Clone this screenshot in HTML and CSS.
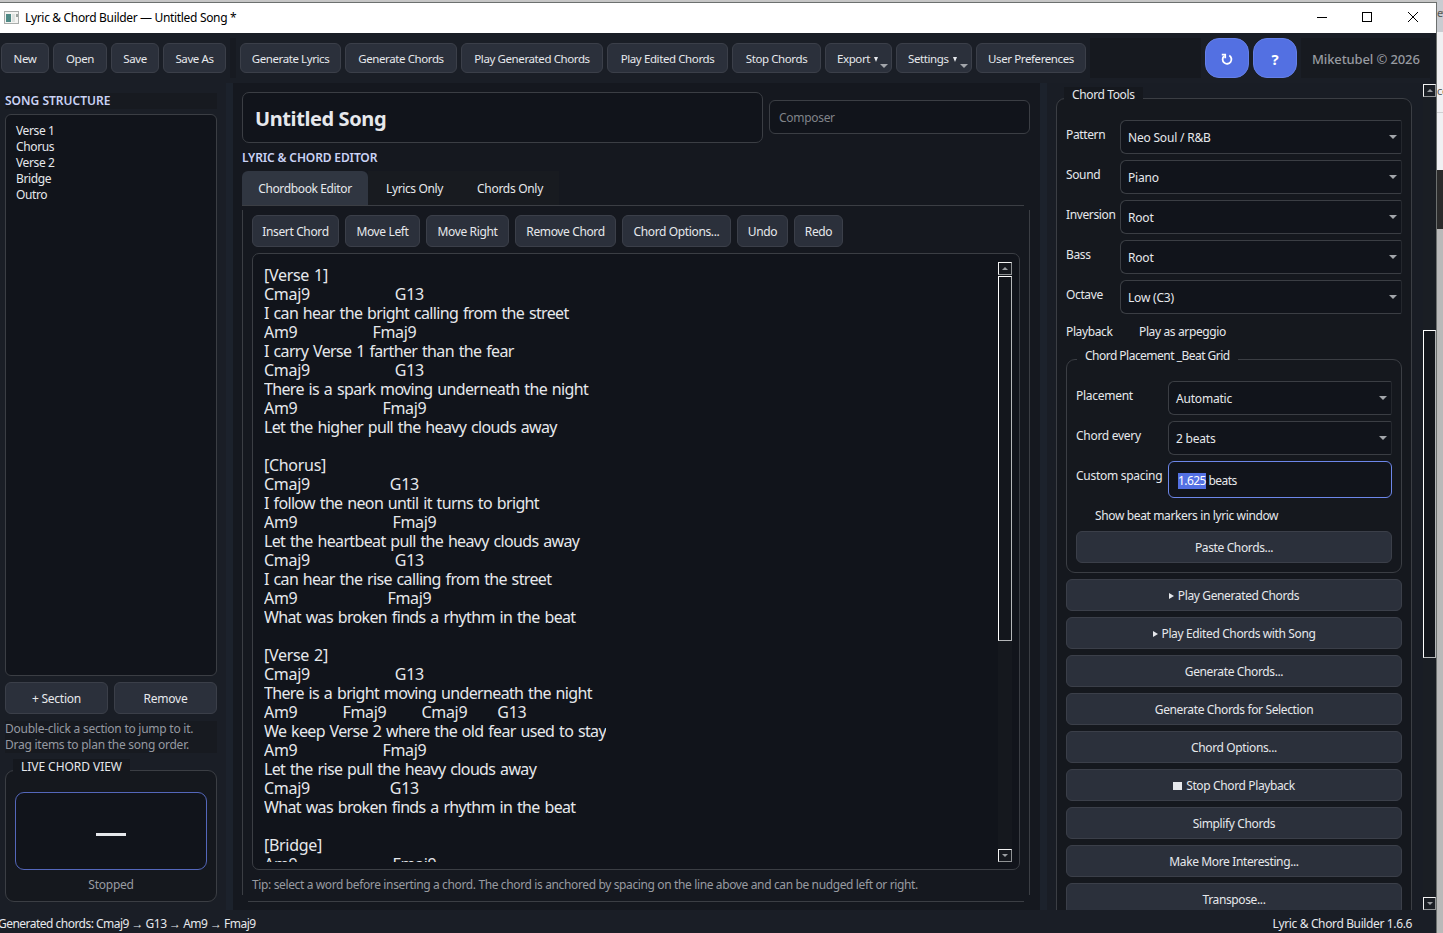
FILE: index.html
```
<!DOCTYPE html>
<html lang="en">
<head>
    <meta charset="UTF-8">
    <title>Lyric &amp; Chord Builder</title>
    <link rel="stylesheet" href="styles.css">
</head>
<body>

<div class="window">
    <div class="titlebar">
        <svg class="app-icon" width="15" height="13" viewBox="0 0 15 13">
            <rect x="0.5" y="0.5" width="14" height="12" fill="#f4f4f2" stroke="#a9adab"/>
            <rect x="2" y="3" width="5" height="8" fill="#4f8a86"/>
            <rect x="8" y="3" width="3" height="8" fill="#dde2df"/>
            <rect x="12" y="3" width="2" height="3" fill="#9aa39f"/>
        </svg>
        <span class="window-title">Lyric &amp; Chord Builder — Untitled Song *</span>
        <svg class="window-buttons" width="104" height="12" viewBox="0 0 104 12" fill="none" stroke="#000">
            <path d="M0 6.500H10"/>
            <rect x="45.500" y="1.500" width="9" height="9"/>
            <path d="M91 1L101 11M101 1L91 11"/>
        </svg>
    </div>

    <div class="toolbar">
        <div class="btn w-new">New</div>
        <div class="btn w-open">Open</div>
        <div class="btn w-save">Save</div>
        <div class="btn w-save-as">Save As</div>
        <div class="separator"></div>
        <div class="btn w-gen-lyrics">Generate Lyrics</div>
        <div class="btn w-gen-chords">Generate Chords</div>
        <div class="btn w-play-gen">Play Generated Chords</div>
        <div class="btn w-play-edit">Play Edited Chords</div>
        <div class="btn w-stop">Stop Chords</div>
        <div class="btn menu w-export">Export<i class="tri"></i></div>
        <div class="btn menu w-settings">Settings<i class="tri"></i></div>
        <div class="btn w-prefs">User Preferences</div>
        <div class="spacer"></div>
        <div class="round">
            <svg width="12" height="12" viewBox="0 0 12 12" fill="none" stroke="#fff" stroke-width="1.800">
                <path d="M8.300 2.600A4.400 4.400 0 1 1 3 3.200"/>
                <path d="M0.800 1.700H4.200V5.200"/>
            </svg>
        </div>
        <div class="round">?</div>
        <div class="credit">Miketubel © 2026</div>
    </div>

    <div class="main">
        <div class="left">
            <div class="heading">SONG STRUCTURE</div>
            <ul class="sections">
                <li>Verse 1</li>
                <li>Chorus</li>
                <li>Verse 2</li>
                <li>Bridge</li>
                <li>Outro</li>
            </ul>
            <div class="section-buttons">
                <div class="btn">+ Section</div>
                <div class="btn">Remove</div>
            </div>
            <div class="hint">Double-click a section to jump to it.<br>Drag items to plan the song order.</div>
            <div class="group live">
                <span class="group-title">LIVE CHORD VIEW</span>
                <div class="live-chord"><span class="dash"></span></div>
                <div class="live-state">Stopped</div>
            </div>
        </div>

        <div class="splitter"></div>

        <div class="center">
            <div class="song-row">
                <div class="song-title">Untitled Song</div>
                <div class="composer">Composer</div>
            </div>
            <div class="heading">LYRIC &amp; CHORD EDITOR</div>
            <div class="tabs">
                <div class="tab active">Chordbook Editor</div>
                <div class="tab">Lyrics Only</div>
                <div class="tab">Chords Only</div>
            </div>
            <div class="pane">
                <div class="edit-bar">
                    <div class="btn w-insert">Insert Chord</div>
                    <div class="btn w-left">Move Left</div>
                    <div class="btn w-right">Move Right</div>
                    <div class="btn w-remove">Remove Chord</div>
                    <div class="btn w-options">Chord Options...</div>
                    <div class="btn w-undo">Undo</div>
                    <div class="btn w-redo">Redo</div>
                </div>
                <div class="editor">
<pre class="lyrics">[Verse 1]
Cmaj9                 G13
<span>I can hear the bright calling from the street</span>
Am9               Fmaj9
<span>I carry Verse 1 farther than the fear</span>
Cmaj9                 G13
<span>There is a spark moving underneath the night</span>
Am9                 Fmaj9
<span>Let the higher pull the heavy clouds away</span>

[Chorus]
Cmaj9                G13
<span>I follow the neon until it turns to bright</span>
Am9                   Fmaj9
<span>Let the heartbeat pull the heavy clouds away</span>
Cmaj9                 G13
<span>I can hear the rise calling from the street</span>
Am9                  Fmaj9
<span>What was broken finds a rhythm in the beat</span>

[Verse 2]
Cmaj9                 G13
<span>There is a bright moving underneath the night</span>
Am9         Fmaj9       Cmaj9      G13
<span>We keep Verse 2 where the old fear used to stay</span>
Am9                 Fmaj9
<span>Let the rise pull the heavy clouds away</span>
Cmaj9                G13
<span>What was broken finds a rhythm in the beat</span>

[Bridge]
Am9                   Fmaj9</pre>
                    <div class="scrollbar">
                        <div class="arrow up"></div>
                        <div class="thumb"></div>
                        <div class="arrow down"></div>
                    </div>
                </div>
                <div class="tip">Tip: select a word before inserting a chord. The chord is anchored by spacing on the line above and can be nudged left or right.</div>
            </div>
        </div>

        <div class="splitter"></div>

        <div class="right">
            <div class="group tools">
                <span class="group-title">Chord Tools</span>
                <div class="field"><label>Pattern</label><div class="combo">Neo Soul / R&amp;B</div></div>
                <div class="field"><label>Sound</label><div class="combo">Piano</div></div>
                <div class="field"><label>Inversion</label><div class="combo">Root</div></div>
                <div class="field"><label>Bass</label><div class="combo">Root</div></div>
                <div class="field"><label>Octave</label><div class="combo">Low (C3)</div></div>
                <div class="playback"><label>Playback</label><span>Play as arpeggio</span></div>

                <div class="group placement">
                    <span class="group-title">Chord Placement _Beat Grid</span>
                    <div class="field"><label>Placement</label><div class="combo">Automatic</div></div>
                    <div class="field"><label>Chord every</label><div class="combo">2 beats</div></div>
                    <div class="field"><label>Custom spacing</label><div class="spin"><mark>1.625</mark> beats</div></div>
                    <div class="markers">Show beat markers in lyric window</div>
                    <div class="btn">Paste Chords...</div>
                </div>

                <div class="actions">
                    <div class="btn"><i class="play"></i>Play Generated Chords</div>
                    <div class="btn"><i class="play"></i>Play Edited Chords with Song</div>
                    <div class="btn">Generate Chords...</div>
                    <div class="btn">Generate Chords for Selection</div>
                    <div class="btn">Chord Options...</div>
                    <div class="btn"><i class="stop"></i>Stop Chord Playback</div>
                    <div class="btn">Simplify Chords</div>
                    <div class="btn">Make More Interesting...</div>
                    <div class="btn">Transpose...</div>
                </div>
            </div>
            <div class="scrollbar">
                <div class="arrow up"></div>
                <div class="thumb"></div>
                <div class="arrow down"></div>
            </div>
        </div>
    </div>

    <div class="statusbar">
        <span class="status-text">Generated chords: Cmaj9 → G13 → Am9 → Fmaj9</span>
        <span class="version">Lyric &amp; Chord Builder 1.6.6</span>
    </div>
</div>

<!-- sliver of the window behind -->
<div class="behind">
    <div class="behind-top">ev</div>
    <div class="behind-bar">ce</div>
    <div class="behind-page"></div>
    <div class="behind-dark"></div>
    <div class="behind-rest"></div>
</div>

</body>
</html>
```
FILE: styles.css
```
* {
    box-sizing: border-box;
}

body {
    margin: 0;
    width: 1443px;
    height: 933px;
    display: flex;
    overflow: hidden;
    background-color: #c6c6c6;
    font-family: "Noto Sans", "Open Sans", sans-serif;
    font-size: 12px;
    line-height: 16px;
    letter-spacing: -0.37px;
    color: #e6e8ec;
}

.window {
    width: 1437px;
    height: 931px;
    margin-top: 2px;
    border-top: 1px solid #6c706f;
    border-right: 1px solid #6c706f;
    background-color: #1a1e26;
    display: flex;
    flex-direction: column;
    flex-shrink: 0;
}

/* title bar */
.titlebar {
    height: 30px;
    background-color: #fff;
    color: #000;
    display: flex;
    align-items: center;
    padding: 0 15px 2px 4px;
    flex-shrink: 0;
}

.window-title {
    margin: 2px 0 0 6px;
    flex: 1;
    letter-spacing: -0.33px;
}

/* buttons */
.btn {
    height: 32px;
    display: flex;
    align-items: center;
    justify-content: center;
    background-color: #2b303b;
    border: 1px solid #3b3f49;
    border-radius: 6px;
    white-space: nowrap;
    padding-top: 1px;
    flex-shrink: 0;
}

.toolbar {
    height: 50px;
    display: flex;
    align-items: center;
    gap: 4px;
    padding-left: 1px;
    flex-shrink: 0;
}

.toolbar .btn {
    height: 30px;
    padding-top: 2px;
    font-size: 11.5px;
    letter-spacing: -0.4px;
}

.w-new { width: 48px; }
.w-open { width: 54px; }
.w-save { width: 48px; }
.w-save-as { width: 63px; }
.w-gen-lyrics { width: 101px; }
.w-gen-chords { width: 112px; }
.w-play-gen { width: 142px; }
.w-play-edit { width: 121px; }
.w-stop { width: 89px; }
.w-export { width: 67px; }
.w-settings { width: 76px; }
.w-prefs { width: 110px; }

.separator {
    width: 6px;
    height: 40px;
    background-color: #171a21;
}

.btn.menu {
    position: relative;
    justify-content: flex-start;
    padding-left: 11px;
}

.tri {
    border: 2.5px solid transparent;
    border-top: 5px solid #e6e8ec;
    border-bottom: 0;
    margin-left: 4px;
}

.btn.menu::after {
    content: "";
    position: absolute;
    right: 3px;
    bottom: 4px;
    border: 4px solid transparent;
    border-top-color: #a3a6ab;
    border-bottom: 0;
}

.spacer {
    width: 111px;
    height: 40px;
    background-color: #16191f;
}

.round {
    width: 44px;
    height: 40px;
    border-radius: 14px;
    background-color: #5370e2;
    border: 1px solid #6580e8;
    color: #fff;
    font-size: 15px;
    font-weight: bold;
    display: flex;
    align-items: center;
    justify-content: center;
    padding-top: 2px;
}

.credit {
    width: 129px;
    height: 40px;
    padding: 2px 0 0 11px;
    display: flex;
    align-items: center;
    background-color: #171a20;
    color: #989ba1;
    font-size: 13px;
    font-weight: 500;
    letter-spacing: -0.12px;
    white-space: nowrap;
}

/* columns */
.main {
    height: 827px;
    display: flex;
    flex-shrink: 0;
    overflow: hidden;
}

.splitter {
    width: 7px;
    background-color: #1c222c;
}

.heading {
    height: 16px;
    font-weight: 600;
    letter-spacing: -0.13px;
    color: #cad2f5;
}

.left {
    width: 226px;
    padding: 10px 9px 0 5px;
    display: flex;
    flex-direction: column;
}

.left .heading {
    background-color: #171a20;
    letter-spacing: 0;
}

.sections {
    height: 562px;
    margin: 5px 0 6px;
    padding: 8px 10px;
    list-style: none;
    background-color: #11141b;
    border: 1px solid #3b3e44;
    border-radius: 6px;
}

.section-buttons {
    display: flex;
    gap: 6px;
}

.section-buttons .btn {
    flex: 1;
    letter-spacing: -0.25px;
}

.hint {
    height: 32px;
    margin-top: 7px;
    background-color: #171a20;
    color: #9599a0;
    letter-spacing: -0.25px;
    white-space: nowrap;
}

.group {
    position: relative;
    border: 1px solid #3b3e44;
    border-radius: 9px;
    background-color: #15181e;
}

.group-title {
    position: absolute;
    top: -12px;
    left: 7px;
    padding: 0 8px;
    background-color: #15181e;
    white-space: nowrap;
}

.live {
    height: 132px;
    margin-top: 17px;
    padding: 21px 9px 0;
}

.live .group-title {
    letter-spacing: -0.05px;
}

.live-chord {
    height: 78px;
    background-color: #11141b;
    border: 1px solid #5467bb;
    border-radius: 9px;
    display: flex;
    align-items: center;
    justify-content: center;
}

.dash {
    width: 30px;
    height: 3px;
    margin-top: 7px;
    background-color: #e6e8ec;
}

.live-state {
    margin-top: 7px;
    text-align: center;
    color: #989ba1;
    letter-spacing: -0.25px;
}

/* editor column */
.center {
    width: 807px;
    padding: 9px 10px 0 9px;
    background-color: #15181f;
}

.song-row {
    display: flex;
    gap: 6px;
    align-items: center;
    margin-bottom: 7px;
}

.song-title,
.composer {
    background-color: #11141b;
    border: 1px solid #3b3e44;
    border-radius: 6px;
    display: flex;
    align-items: center;
}

.song-title {
    width: 521px;
    height: 51px;
    padding: 2px 0 0 12px;
    border-radius: 7px;
    font-size: 20px;
    font-weight: bold;
    letter-spacing: -0.4px;
}

.composer {
    width: 261px;
    height: 34px;
    margin-top: -1px;
    padding: 2px 0 0 9px;
    color: #808389;
    letter-spacing: -0.3px;
}

.tabs {
    height: 35px;
    width: 782px;
    margin-top: 5px;
    display: flex;
    border-bottom: 1px solid #3b3e44;
}

.tab {
    width: 93px;
    padding-top: 2px;
    display: flex;
    align-items: center;
    justify-content: center;
    background-color: #181b20;
}

.tab:last-child {
    width: 98px;
    letter-spacing: -0.3px;
}

.tab.active {
    width: 126px;
    background-color: #303641;
    border-radius: 6px 6px 0 0;
}

.pane {
    position: relative;
    height: 696px;
    padding: 9px 10px 0 10px;
}

/* pane frame with open corners */
.pane::before,
.pane::after {
    content: "";
    position: absolute;
    pointer-events: none;
}

.pane::before {
    left: 0;
    right: 0;
    top: 4px;
    bottom: 7px;
    border: 1px solid #3b3e44;
    border-width: 0 1px;
}

.pane::after {
    left: 6px;
    right: 6px;
    bottom: 0;
    border-bottom: 1px solid #3b3e44;
}

.edit-bar {
    display: flex;
    gap: 6px;
}

.w-insert { width: 87px; }
.w-left { width: 75px; }
.w-right { width: 83px; }
.w-remove { width: 101px; }
.w-options { width: 109px; }
.w-undo { width: 51px; }
.w-redo { width: 49px; }

.editor {
    height: 617px;
    margin-top: 6px;
    padding: 8px 7px 7px 11px;
    display: flex;
    justify-content: space-between;
    background-color: #11141b;
    border: 1px solid #3b3e44;
    border-radius: 7px;
}

.lyrics {
    height: 600px;
    margin: 0;
    padding-top: 4px;
    overflow: hidden;
    font-family: "Noto Sans", "Open Sans", sans-serif;
    font-size: 16px;
    line-height: 19px;
    letter-spacing: -0.3px;
    word-spacing: 1.14px;
}

.lyrics span {
    letter-spacing: -0.65px;
    word-spacing: 1.24px;
}

.tip {
    margin-top: 7px;
    color: #989ba1;
    white-space: nowrap;
}

.scrollbar {
    width: 14px;
    display: flex;
    flex-direction: column;
    background-color: #15181e;
}

.arrow {
    height: 13px;
    border: 1px solid #f2f2f2;
    border-right-color: #8f9294;
    border-bottom-color: #8f9294;
    display: flex;
    align-items: center;
    justify-content: center;
    flex-shrink: 0;
}

.arrow::before {
    content: "";
    border: 3px solid transparent;
}

.arrow.up::before {
    border-top: 0;
    border-bottom-color: #9a9da1;
}

.arrow.down::before {
    border-bottom: 0;
    border-top-color: #9a9da1;
}

.arrow.down {
    margin-top: auto;
}

.thumb {
    border: 1px solid #fff;
    border-right-color: #b5b7b9;
    border-bottom-color: #b5b7b9;
    background-color: #13161c;
}

.editor .thumb {
    height: 365px;
    margin-top: 1px;
}

/* chord tools column */
.right {
    flex: 1;
    display: flex;
    padding: 1px 0 0 9px;
    background-color: #191d25;
}

.tools {
    width: 356px;
    height: 900px;
    margin-top: 14px;
    padding: 21px 9px 0;
}

.field {
    display: flex;
    margin-bottom: 6px;
}

.field label {
    width: 54px;
    padding-top: 7px;
    white-space: nowrap;
}

.combo,
.spin {
    position: relative;
    flex: 1;
    height: 34px;
    padding: 1px 0 0 7px;
    display: flex;
    align-items: center;
    background-color: #11141b;
    border: 1px solid #3b3e44;
    border-right-color: #24272d;
    border-radius: 6px 2px 2px 6px;
    letter-spacing: -0.2px;
}

.combo::after {
    content: "";
    position: absolute;
    right: 4px;
    top: 14px;
    border: 4px solid transparent;
    border-top-color: #a3a6ab;
    border-bottom: 0;
}

.playback {
    display: flex;
    margin-top: 10px;
}

.playback label {
    width: 73px;
}

.placement {
    height: 214px;
    margin-top: 19px;
    padding: 21px 9px 0;
}

.placement .group-title {
    left: 10px;
    letter-spacing: -0.52px;
}

.placement .field label {
    width: 92px;
    letter-spacing: -0.28px;
}

.spin {
    height: 37px;
    padding: 3px 0 0 9px;
    border-color: #6d87ea;
    border-radius: 6px;
    white-space: pre;
    letter-spacing: -0.55px;
}

.spin mark {
    background-color: #5370e2;
    color: #fff;
}

.markers {
    margin: 10px 0 7px 19px;
}

.actions {
    display: flex;
    flex-direction: column;
    gap: 6px;
    margin-top: 6px;
}

.play {
    border: 3px solid transparent;
    border-left: 5px solid #e6e8ec;
    border-right: 0;
    margin-right: 4px;
}

.stop {
    width: 9px;
    height: 8px;
    margin-right: 4px;
    background-color: #e6e8ec;
}

.right > .scrollbar {
    width: 13px;
    margin-left: 11px;
    background-color: #1a1e24;
}

.right .thumb {
    height: 328px;
    margin-top: 233px;
}

.statusbar {
    flex: 1;
    display: flex;
    justify-content: space-between;
    align-items: center;
    padding: 4px 24px 0 0;
    white-space: nowrap;
}

.status-text {
    margin-left: -2px;
    letter-spacing: -0.52px;
}

/* background window */
.behind {
    flex: 1;
    display: flex;
    flex-direction: column;
    color: #555;
    font-size: 11px;
    overflow: hidden;
}

.behind-top {
    height: 32px;
    padding-top: 5px;
    background-color: #c9ccd1;
}

.behind-bar {
    height: 81px;
    padding-top: 51px;
    background-color: #f0f0f2;
    border-bottom: 1px solid #cfcfd1;
}

.behind-page {
    height: 57px;
    background-color: #f0f0f2;
}

.behind-dark {
    height: 59px;
    background-color: #2b2b2b;
}

.behind-rest {
    flex: 1;
    background-color: #b9b9b9;
}
```
